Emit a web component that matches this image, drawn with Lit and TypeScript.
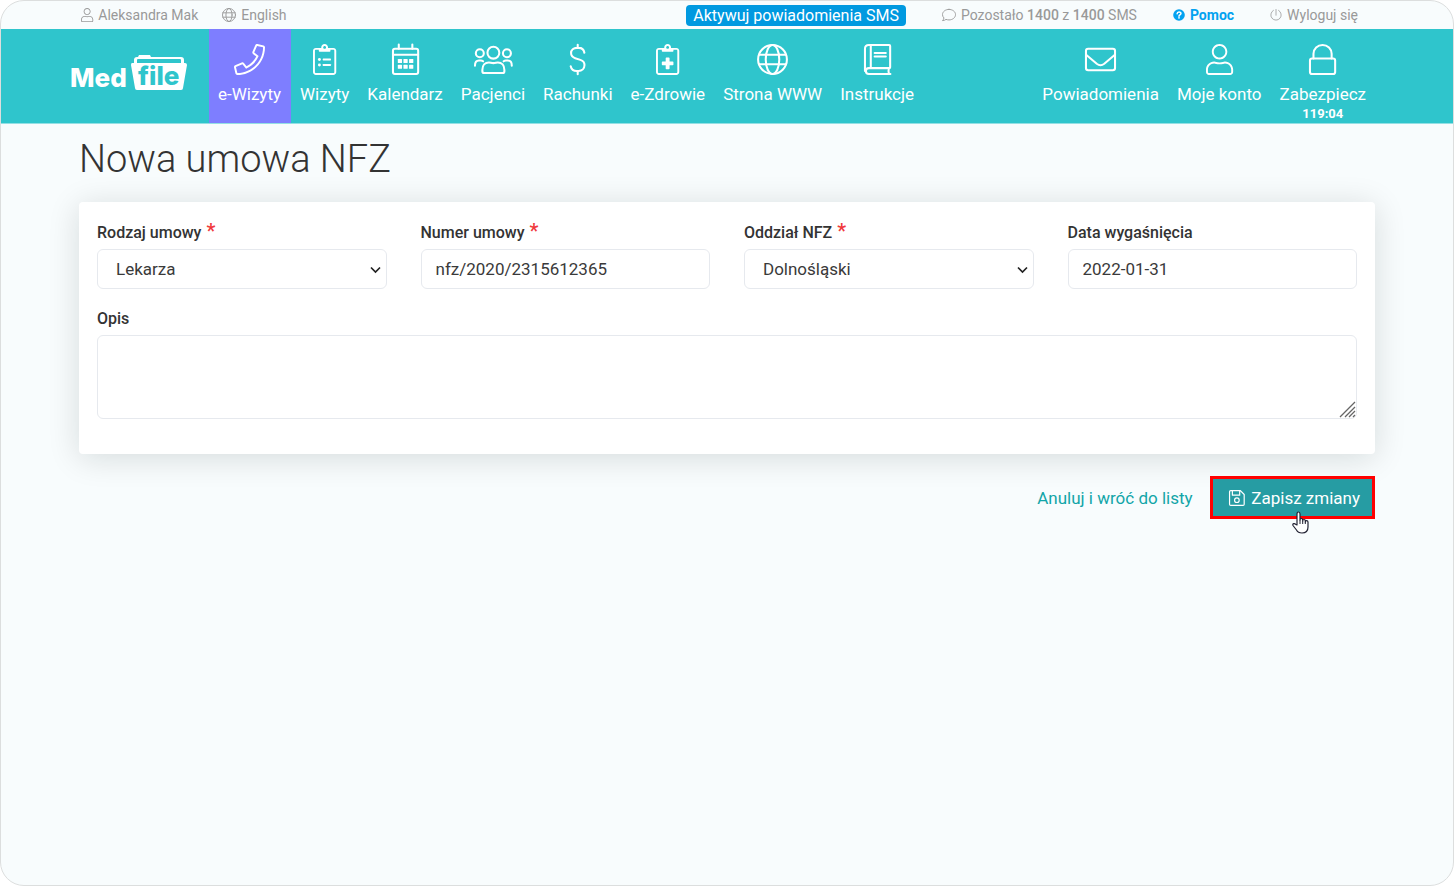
import { LitElement, html, css, svg, TemplateResult } from "lit";
import { customElement, property } from "lit/decorators.js";

interface Icon {
  w: number;
  body: TemplateResult;
}

const clipboard = svg`<path class="f" d="M336 64h-88.600c.4-2.600.6-5.300.6-8 0-30.900-25.100-56-56-56s-56 25.100-56 56c0 2.700.2 5.400.6 8H48C21.500 64 0 85.500 0 112v352c0 26.500 21.500 48 48 48h288c26.500 0 48-21.500 48-48V112c0-26.500-21.500-48-48-48zM192 32c13.300 0 24 10.700 24 24s-10.700 24-24 24-24-10.700-24-24 10.700-24 24-24zm160 432c0 8.800-7.200 16-16 16H48c-8.800 0-16-7.200-16-16V112c0-8.800 7.200-16 16-16h48v20c0 6.600 5.400 12 12 12h168c6.600 0 12-5.400 12-12V96h48c8.800 0 16 7.200 16 16z"/>`;

const ICONS: Record<string, Icon> = {
  user: {
    w: 448,
    body: svg`<path class="f" d="M313.600 288c-28.700 0-42.500 16-89.600 16-47.100 0-60.800-16-89.600-16C60.200 288 0 348.200 0 422.400V464c0 26.500 21.500 48 48 48h352c26.500 0 48-21.500 48-48v-41.600c0-74.200-60.200-134.400-134.400-134.400zM416 464c0 8.800-7.200 16-16 16H48c-8.800 0-16-7.200-16-16v-41.600C32 365.900 77.900 320 134.400 320c19.600 0 39.100 16 89.600 16 50.400 0 70-16 89.600-16 56.500 0 102.400 45.900 102.400 102.400V464zM224 256c70.700 0 128-57.300 128-128S294.700 0 224 0 96 57.300 96 128s57.300 128 128 128zm0-224c52.900 0 96 43.100 96 96s-43.100 96-96 96-96-43.100-96-96 43.100-96 96-96z"/>`,
  },
  phone: {
    w: 512,
    body: svg`<path class="f" d="M487.800 24.100L387 .8c-14.700-3.400-29.800 4.200-35.800 18.100l-46.500 108.500c-5.500 12.700-1.800 27.700 8.900 36.500l53.900 44.100c-34 69.200-90.300 125.600-159.600 159.600l-44.100-53.900c-8.800-10.700-23.800-14.400-36.500-8.900L18.900 351.300C5 357.300-2.600 372.400.8 387L24 487.700C27.300 502 39.900 512 54.500 512 306.700 512 512 307.800 512 54.600c0-14.600-10-27.200-24.200-30.500zM55.100 480l-23-99.600 107.400-46 59.500 72.800c103.600-48.600 159.700-104.900 208.100-208.100l-72.800-59.500 46-107.400 99.600 23C479.700 289.700 289.600 479.700 55.100 480z"/>`,
  },
  list: {
    w: 384,
    body: svg`${clipboard}<g class="f"><circle cx="106" cy="256" r="24"/><circle cx="106" cy="346" r="24"/><rect x="160" y="240" width="136" height="32" rx="8"/><rect x="160" y="330" width="136" height="32" rx="8"/></g>`,
  },
  calendar: {
    w: 448,
    body: svg`<rect x="16" y="80" width="416" height="416" rx="32"/><path d="M16 176h416M112 8v72M336 8v72"/><g class="f"><rect x="96" y="248" width="70" height="66" rx="10"/><rect x="189" y="248" width="70" height="66" rx="10"/><rect x="282" y="248" width="70" height="66" rx="10"/><rect x="96" y="344" width="70" height="66" rx="10"/><rect x="189" y="344" width="70" height="66" rx="10"/><rect x="282" y="344" width="70" height="66" rx="10"/></g>`,
  },
  users: {
    w: 640,
    body: svg`<circle cx="320" cy="144" r="98"/><circle cx="96" cy="152" r="66"/><circle cx="544" cy="152" r="66"/><path d="M168 480c-18 0-30-12-30-30v-22c0-72 44-124 108-124 26 0 38 12 74 12s48-12 74-12c64 0 108 52 108 124v22c0 18-12 30-30 30zM16 358c0-52 28-84 66-84h32c14 0 26 4 36 12M624 358c0-52-28-84-66-84h-32c-14 0-26 4-36 12"/>`,
  },
  dollar: {
    w: 288,
    body: svg`<path d="M144 12v52M144 448v52M254 144c-8-50-44-80-94-80h-28C76 64 34 100 34 150c0 42 24 70 68 84l86 28c44 14 68 44 68 86 0 56-42 98-100 98h-26c-54 0-92-30-102-78"/>`,
  },
  medical: {
    w: 384,
    body: svg`${clipboard}<path class="f" d="M160 236q0-12 12-12h40q12 0 12 12v52h52q12 0 12 12v40q0 12-12 12h-52v52q0 12-12 12h-40q-12 0-12-12v-52h-52q-12 0-12-12v-40q0-12 12-12h52z"/>`,
  },
  globe: {
    w: 512,
    body: svg`<circle cx="256" cy="256" r="238"/><ellipse cx="256" cy="256" rx="112" ry="238"/><path d="M32 176h448M32 336h448"/>`,
  },
  book: {
    w: 448,
    body: svg`<path d="M80 16h336q16 0 16 16v352q0 14-16 14H80a49 49 0 0 0 0 98h356M80 16C42 16 16 42 16 80v366M112 16v382M412 400c-10 30-10 66 0 94M176 150h184M176 208h184"/>`,
  },
  mail: {
    w: 512,
    body: svg`<rect x="16" y="80" width="480" height="352" rx="36"/><path d="M18 178 194 326q62 48 124 0L494 178"/>`,
  },
  lock: {
    w: 448,
    body: svg`<rect x="16" y="240" width="416" height="256" rx="34"/><path d="M74 240v-78a150 146 0 0 1 300 0v78"/>`,
  },
  comment: {
    w: 512,
    body: svg`<path d="M256 50C124 50 18 136 18 242c0 46 20 88 54 122-6 40-28 72-54 98 54 0 98-20 128-46 34 14 70 20 110 20 132 0 238-86 238-194S388 50 256 50z"/>`,
  },
  power: {
    w: 512,
    body: svg`<path d="M256 20v244M366 58a222 222 0 1 1-220 0"/>`,
  },
  save: {
    w: 448,
    body: svg`<path d="M48 48h276l108 108v276q0 32-32 32H48q-32 0-32-32V80q0-32 32-32zM96 48v128h208V48"/><circle cx="224" cy="318" r="66"/>`,
  },
  help: {
    w: 512,
    body: svg`<circle class="f" cx="256" cy="256" r="248"/><path class="q" d="M176 202c4-90 164-96 164-6 0 60-84 52-84 108"/><circle class="qd" cx="256" cy="376" r="38"/>`,
  },
};

@customElement("mf-icon")
export class MfIcon extends LitElement {
  @property() name = "user";

  static styles = css`
    :host {
      display: inline-flex;
      height: 1em;
    }
    svg {
      display: block;
      height: 100%;
      width: auto;
      overflow: visible;
      fill: none;
      stroke: currentColor;
      stroke-width: 34;
      stroke-linecap: round;
      stroke-linejoin: round;
    }
    .f {
      fill: currentColor;
      stroke: none;
    }
    .q {
      stroke: #fff;
      stroke-width: 64;
    }
    .qd {
      fill: #fff;
      stroke: none;
    }
  `;

  render() {
    const icon = ICONS[this.name];
    return html`<svg viewBox="0 0 ${icon.w} 512" aria-hidden="true">${icon.body}</svg>`;
  }
}

const MAIN_NAV = [
  { icon: "phone", label: "e-Wizyty", active: true },
  { icon: "list", label: "Wizyty" },
  { icon: "calendar", label: "Kalendarz" },
  { icon: "users", label: "Pacjenci" },
  { icon: "dollar", label: "Rachunki" },
  { icon: "medical", label: "e-Zdrowie" },
  { icon: "globe", label: "Strona WWW" },
  { icon: "book", label: "Instrukcje" },
];

const SIDE_NAV = [
  { icon: "mail", label: "Powiadomienia" },
  { icon: "user", label: "Moje konto" },
  { icon: "lock", label: "Zabezpiecz", timer: "119:04" },
];

@customElement("app-root")
export class AppRoot extends LitElement {
  static styles = css`
    :host {
      display: block;
      font-family: Roboto, "Liberation Sans", sans-serif;
      color: #333;
      background: #fff;
    }
    * {
      box-sizing: border-box;
    }
    a {
      color: inherit;
      text-decoration: none;
    }
    .frame {
      min-height: 100vh;
      border: 1px solid #dcdede;
      border-radius: 24px;
      background: #f8fcfd;
      overflow: hidden;
    }
    .container {
      max-width: 1296px;
      margin: 0 auto;
    }
    .top {
      display: flex;
      align-items: center;
      justify-content: space-between;
      height: 28px;
      padding: 0 17px 0 2px;
      font-size: 14px;
      color: #999;
    }
    .group {
      display: flex;
      align-items: center;
      gap: 24px;
    }
    .group.wide {
      gap: 36px;
    }
    .mini {
      display: flex;
      align-items: center;
      gap: 5px;
    }
    .mini mf-icon {
      font-size: 14px;
    }
    .mini.help {
      color: #03a2f0;
      font-weight: 700;
    }
    .mini.help mf-icon,
    .mini.out mf-icon {
      font-size: 12px;
    }
    .mini b {
      font-weight: 500;
    }
    .badge {
      padding: 0 7px;
      border-radius: 4px;
      background: #0099e0;
      color: #fff;
      font-size: 16px;
      line-height: 21px;
    }
    .header {
      background: #2fc5cc;
      border-bottom: 1px solid #94e0e4;
    }
    .bar {
      display: flex;
      align-items: stretch;
      min-height: 94px;
    }
    .logo {
      display: flex;
      align-items: flex-start;
      gap: 4px;
      width: 139px;
      margin-left: -9px;
      padding-top: 25px;
      color: #fff;
      font: 800 26px/48px Inter, sans-serif;
    }
    .folder {
      position: relative;
      width: 56px;
      height: 37px;
    }
    .folder svg {
      display: block;
      width: 56px;
      height: 37px;
    }
    .folder span {
      position: absolute;
      inset: 8px 0 0;
      text-align: center;
      line-height: 28px;
      color: #2fc5cc;
    }
    .nav {
      display: flex;
    }
    .nav.side {
      margin-left: auto;
    }
    .item {
      display: flex;
      flex-direction: column;
      align-items: center;
      padding: 15px 9px 0;
      color: #fff;
      font-size: 17px;
      line-height: 24px;
    }
    .item mf-icon {
      font-size: 31px;
      margin-bottom: 7px;
    }
    .item.active {
      padding-right: 10px;
      background: #7e7eff;
    }
    .timer {
      font-size: 13px;
      line-height: 16px;
      font-weight: 700;
    }
    h1 {
      margin: 0;
      padding: 12px 0 20px;
      font-size: 38px;
      line-height: 46px;
      font-weight: 300;
    }
    .card {
      padding: 19px 18px 35px;
      border-radius: 4px;
      background: #fff;
      box-shadow: 0 4px 32px rgba(0, 20, 20, 0.14);
    }
    .grid {
      display: grid;
      grid-template-columns: repeat(4, 1fr);
      gap: 18px 34px;
    }
    .field {
      display: flex;
      flex-direction: column;
      min-width: 0;
    }
    .full {
      grid-column: 1 / -1;
    }
    label {
      margin-bottom: 4px;
      font-size: 16px;
      line-height: 24px;
      font-weight: 500;
    }
    .req {
      margin-left: 1px;
      color: #f0393c;
      font-size: 20px;
      line-height: 20px;
    }
    input,
    select,
    textarea {
      width: 100%;
      height: 40px;
      padding: 0 14px;
      border: 1px solid #e6e9ee;
      border-radius: 6px;
      background: #fff;
      color: #3a3a3a;
      font: 400 17px/24px Roboto, "Liberation Sans", sans-serif;
      outline: none;
    }
    select {
      appearance: none;
      padding: 0 18px;
    }
    .area {
      position: relative;
      display: flex;
    }
    .chevron {
      position: absolute;
      right: 6px;
      top: 17px;
      width: 11px;
      height: 8px;
      fill: none;
      stroke: #222;
      stroke-width: 1.7;
      pointer-events: none;
    }
    textarea {
      height: 84px;
      padding: 8px 14px;
      resize: none;
    }
    .grip {
      position: absolute;
      right: 1px;
      bottom: 1px;
      width: 17px;
      height: 17px;
      stroke: #666;
      stroke-width: 1.3;
    }
    .actions {
      display: flex;
      align-items: center;
      justify-content: flex-end;
      gap: 17px;
      padding-top: 22px;
      font-size: 17px;
    }
    .cancel {
      color: #12a5a8;
    }
    .save {
      position: relative;
      display: flex;
      align-items: center;
      gap: 7px;
      height: 43px;
      padding: 0 12px 0 16px;
      border: 3px solid #f00;
      background: #269ca3;
      color: #fff;
      font: 400 17px/24px Roboto, "Liberation Sans", sans-serif;
    }
    .pointer {
      position: absolute;
      left: 79px;
      top: 32px;
      width: 18px;
      height: 24px;
    }
    .save mf-icon {
      font-size: 18px;
    }
  `;

  private item(i: { icon: string; label: string; active?: boolean; timer?: string }) {
    return html`<a href="#" class="item ${i.active ? "active" : ""}">
      <mf-icon name=${i.icon}></mf-icon><span>${i.label}</span>
      ${i.timer ? html`<span class="timer">${i.timer}</span>` : ""}
    </a>`;
  }

  private picker(id: string, value: string) {
    return html`<div class="area">
      <select id=${id}><option>${value}</option></select>
      <svg class="chevron" viewBox="0 0 11 8" aria-hidden="true"><path d="M1 1.500 5.500 6 10 1.500" /></svg>
    </div>`;
  }

  render() {
    return html`
      <div class="frame">
        <div class="container top">
          <div class="group">
            <a href="#" class="mini"><mf-icon name="user"></mf-icon>Aleksandra Mak</a>
            <a href="#" class="mini"><mf-icon name="globe"></mf-icon>English</a>
          </div>
          <div class="group wide">
            <a href="#" class="badge">Aktywuj powiadomienia SMS</a>
            <span class="mini"><mf-icon name="comment"></mf-icon><span>Pozostało <b>1400</b> z <b>1400</b> SMS</span></span>
            <a href="#" class="mini help"><mf-icon name="help"></mf-icon>Pomoc</a>
            <a href="#" class="mini out"><mf-icon name="power"></mf-icon>Wyloguj się</a>
          </div>
        </div>
        <header class="header">
          <div class="container bar">
            <a href="#" class="logo">
              Med
              <div class="folder">
                <svg viewBox="0 0 56 37" aria-hidden="true">
                  <path fill="#fff" d="M1 9h2V6q0-3 3-3h1l1-2h11l1 2h30q3 0 3 3v3h1q2 0 2 2l-4 23q0 2-2 2H6q-2 0-2-2L0 11q0-2 1-2z" />
                  <path fill="#2fc5cc" d="M7 5h42q1 0 1 1v3H6V6q0-1 1-1z" />
                </svg>
                <span>file</span>
              </div>
            </a>
            <nav class="nav">${MAIN_NAV.map((i) => this.item(i))}</nav>
            <nav class="nav side">${SIDE_NAV.map((i) => this.item(i))}</nav>
          </div>
        </header>
        <main class="container">
          <h1>Nowa umowa NFZ</h1>
          <form>
            <div class="card grid">
              <div class="field">
                <label for="kind">Rodzaj umowy <span class="req">*</span></label>
                ${this.picker("kind", "Lekarza")}
              </div>
              <div class="field">
                <label for="number">Numer umowy <span class="req">*</span></label>
                <input id="number" type="text" value="nfz/2020/2315612365" />
              </div>
              <div class="field">
                <label for="branch">Oddział NFZ <span class="req">*</span></label>
                ${this.picker("branch", "Dolnośląski")}
              </div>
              <div class="field">
                <label for="expires">Data wygaśnięcia</label>
                <input id="expires" type="text" value="2022-01-31" />
              </div>
              <div class="field full">
                <label for="notes">Opis</label>
                <div class="area">
                  <textarea id="notes"></textarea>
                  <svg class="grip" viewBox="0 0 17 17" aria-hidden="true">
                    <path d="M1 16 16 1M6 16 16 6M10 16l6-6M14 16l2-2" />
                  </svg>
                </div>
              </div>
            </div>
            <div class="actions">
              <a href="#" class="cancel">Anuluj i wróć do listy</a>
              <button type="button" class="save">
                <mf-icon name="save"></mf-icon>Zapisz zmiany
                <svg class="pointer" viewBox="0 0 18 24" aria-hidden="true">
                  <path fill="#fff" stroke="#223" stroke-width="1.200" stroke-linejoin="round" d="M5 14V3q0-2 1.500-2T8 3v6q0-1.500 1.300-1.500T10.700 9v1q0-1.500 1.300-1.500t1.300 1.500v1q0-1.300 1.300-1.300T16 11v5q0 6-6 6-4 0-5.500-3L1 14.500q-.6-1.500.8-1.800 1.200-.2 2 .8z" />
                  <path stroke="#223" stroke-width="1" d="M8 9v4M10.700 10v3M13.300 11v2" />
                </svg>
              </button>
            </div>
          </form>
        </main>
      </div>
    `;
  }
}
